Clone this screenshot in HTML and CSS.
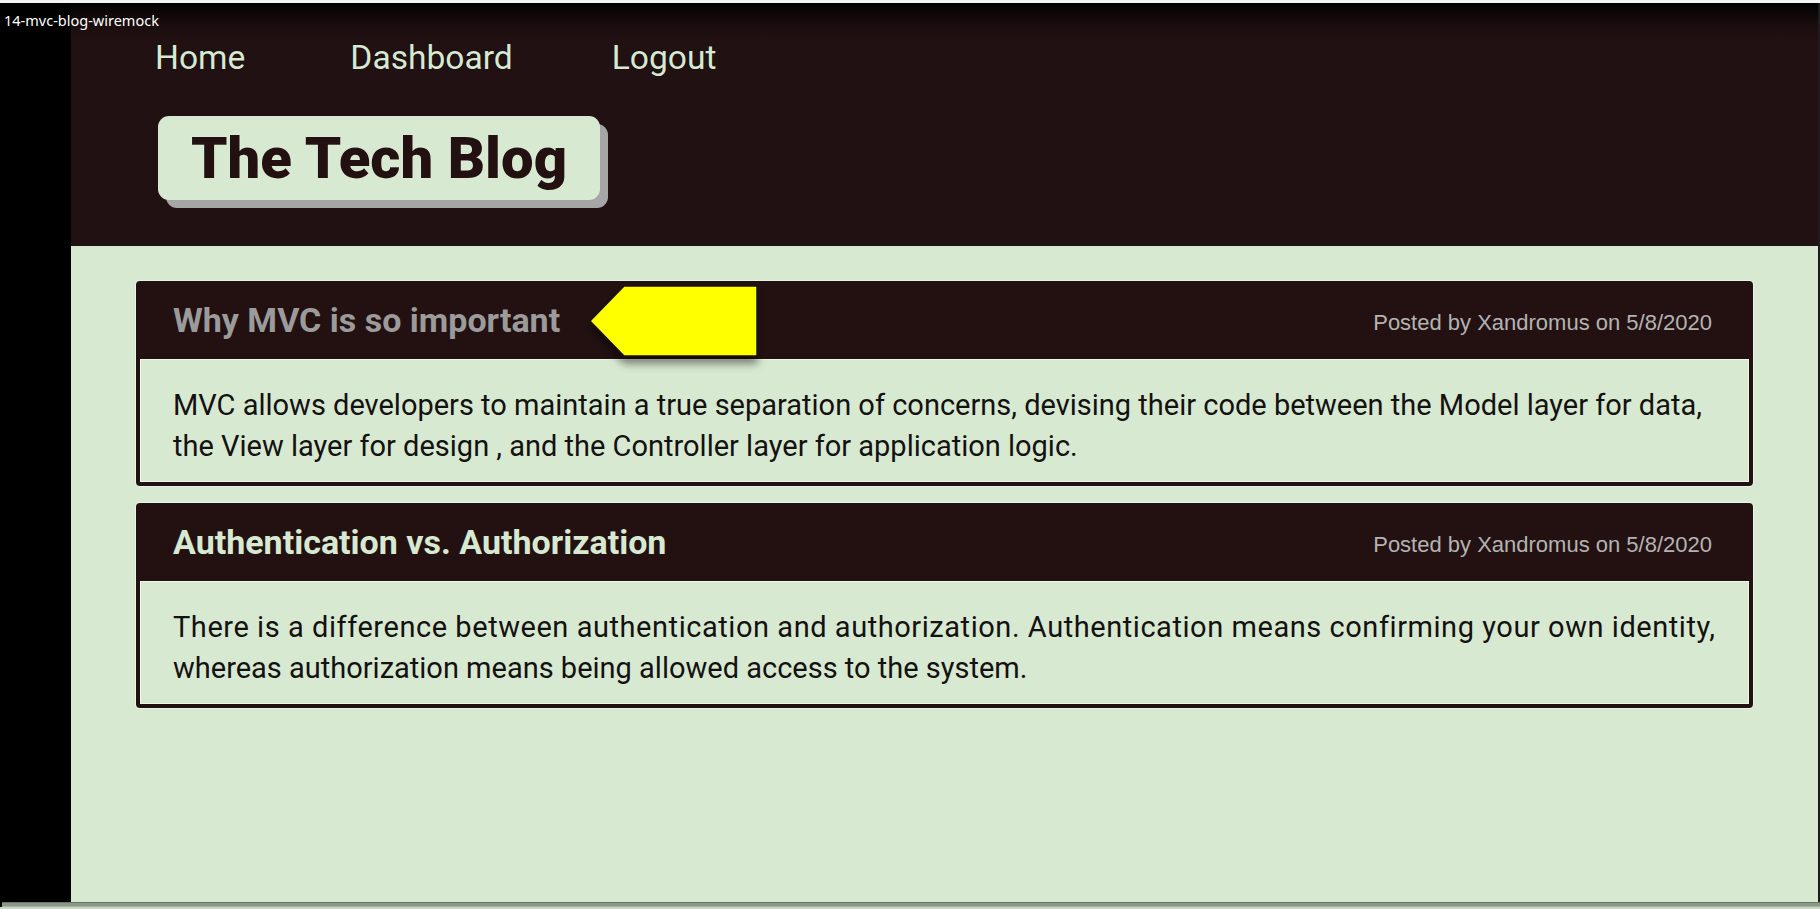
FILE: index.html
```html
<!DOCTYPE html>
<html lang="en">
<head>
<meta charset="utf-8">
<title>The Tech Blog</title>
<link rel="stylesheet" href="styles.css">
</head>
<body>
<div class="topline"></div>
<div class="frame">
  <div class="side"></div>
  <main class="main">
    <header class="header">
      <nav class="nav">
        <a href="#" class="nav-link">Home</a>
        <a href="#" class="nav-link">Dashboard</a>
        <a href="#" class="nav-link">Logout</a>
      </nav>
      <div class="logo-wrap">
        <h1 class="logo">The Tech Blog</h1>
      </div>
    </header>
    <section class="posts">
      <article class="card">
        <div class="card-head">
          <h2 class="card-title dim">Why MVC is so important</h2>
          <span class="meta">Posted by Xandromus on 5/8/2020</span>
          <svg class="pointer" width="176" height="84" viewBox="0 0 176 84" aria-hidden="true">
            <defs>
              <filter id="sh" x="-20%" y="-20%" width="140%" height="160%">
                <feDropShadow dx="0" dy="7" stdDeviation="4" flood-color="#000" flood-opacity="0.45"/>
              </filter>
            </defs>
            <polygon points="35,1 168,1 168,71 35,71 1,36" fill="#ffff00" stroke="#1a1208" stroke-width="1.5" filter="url(#sh)"/>
          </svg>
        </div>
        <div class="card-body">
          <p>MVC allows developers to maintain a true separation of concerns, devising their code between the Model layer for data,<br>the View layer for design , and the Controller layer for application logic.</p>
        </div>
      </article>
      <article class="card">
        <div class="card-head">
          <h2 class="card-title">Authentication vs. Authorization</h2>
          <span class="meta">Posted by Xandromus on 5/8/2020</span>
        </div>
        <div class="card-body">
          <p><span class="wide">There is a difference between authentication and authorization. Authentication means confirming your own identity,</span><br>whereas authorization means being allowed access to the system.</p>
        </div>
      </article>
    </section>
  </main>
  <div class="edge"></div>
</div>
<div class="hscroll"></div>
<div class="bottomline"></div>
<div class="wintitle">14-mvc-blog-wiremock</div>
</body>
</html>
```
FILE: styles.css
```css
* { box-sizing: border-box; }
html, body { margin: 0; padding: 0; }
body {
  width: 1820px;
  height: 909px;
  overflow: hidden;
  background: #000;
  font-family: Roboto, "Noto Sans", sans-serif;
  position: relative;
}
.topline { height: 3px; background: #f4f4f4; }
.frame {
  display: flex;
  height: 899px;
}
.side { width: 71px; background: #000; flex: none; }
.edge { width: 2px; background: #1c1c1c; flex: none; }
.main {
  flex: 1;
  display: flex;
  flex-direction: column;
  background: #d8e9d2;
}
.header {
  height: 243px;
  flex: none;
  background: linear-gradient(#020101 0px, #1b0d0e 22px, #221112 40px, #221112 100%);
  padding: 33px 0 0 84px;
}
.nav {
  display: flex;
  height: 44px;
  align-items: center;
}
.nav-link {
  color: #d8e9d2;
  text-decoration: none;
  font-size: 33.6px;
  font-weight: 400;
  line-height: 44px;
  margin-right: 105px;
  text-shadow: 0 0 1px #000;
}
.nav-link:nth-child(2) { margin-right: 99px; }
.logo-wrap {
  margin-top: 36px;
  margin-left: 3px;
  display: flex;
}
.logo {
  margin: 0;
  height: 84px;
  width: 442px;
  display: flex;
  align-items: center;
  justify-content: center;
  background: #d8e9d2;
  color: #231112;
  border-radius: 11px;
  font-size: 58px;
  font-weight: 900;
  box-shadow: 8px 8px 0 #a6a6a6;
  text-shadow: 0 0 1px #f4fff0;
}
.posts {
  padding: 35px 65px 0;
  display: flex;
  flex-direction: column;
  gap: 17px;
}
.card {
  border: 4px solid #231112;
  border-radius: 4px;
  background: #d8e9d2;
  box-shadow: 0 0 0 1px #e9f4e5;
}
.card-head {
  position: relative;
  height: 74px;
  background: #231112;
  display: flex;
  align-items: center;
  justify-content: space-between;
  padding: 0 37px 0 33px;
}
.card-title {
  margin: 0 0 4px;
  font-size: 34px;
  font-weight: 700;
  color: #d8e9d2;
}
.card-title.dim { color: #9b9b9b; }
.meta {
  font-family: "Liberation Sans", Arial, sans-serif;
  font-size: 22px;
  color: #b3b3b3;
  padding-top: 2px;
}
.pointer {
  position: absolute;
  left: 449px;
  top: 0px;
  overflow: visible;
}
.card-body {
  box-shadow: inset 0 0 0 1px #eef7ea;
  padding: 26px 10px 15px 33px;
}
.card-body p {
  margin: 0;
  font-size: 29px;
  line-height: 41px;
  color: #141111;
  white-space: nowrap;
}
.card-body .wide { letter-spacing: 0.55px; }
.hscroll {
  height: 5px;
  margin-left: 2px;
  background: #8a9888;
  border-top: 1px solid #6a746a;
  border-bottom: 1px solid #a4b0a2;
}
.bottomline { height: 2px; background: #c9d8c5; }
.wintitle {
  position: absolute;
  left: 4px;
  top: 11px;
  color: #fff;
  font-family: "Noto Sans", "Open Sans", sans-serif;
  font-size: 14.5px;
  line-height: 18px;
}
```
